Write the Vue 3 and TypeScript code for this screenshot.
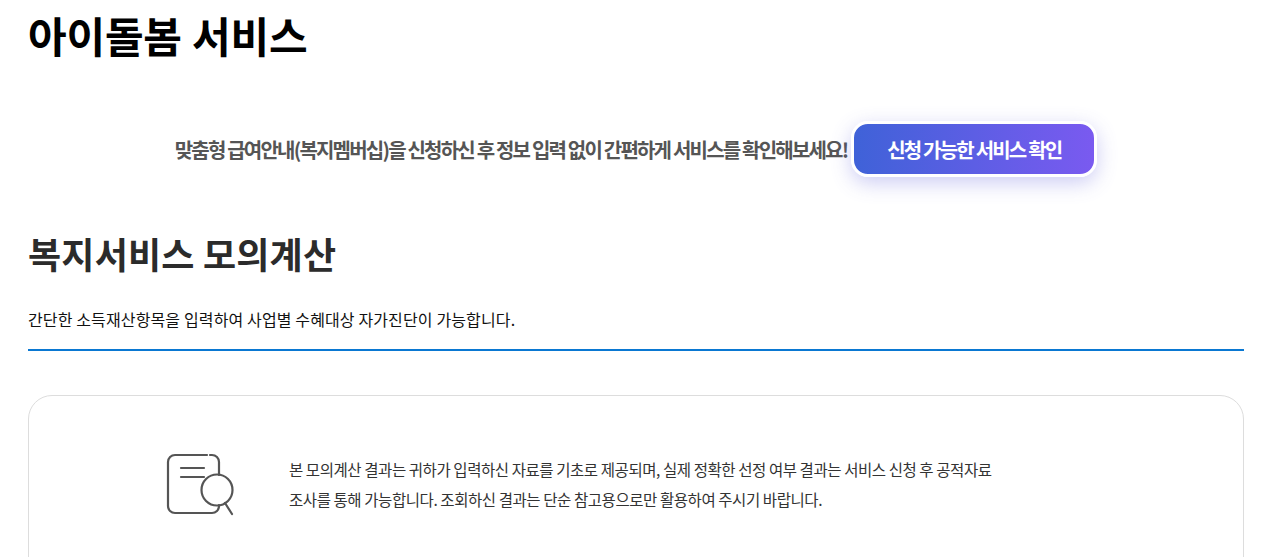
<script setup lang="ts">
const title = '아이돌봄 서비스'
</script>
<template>
  <div class="page">
    <h1 class="title">{{ title }}</h1>
    <div class="promo">
      <p class="promo-text">맞춤형 급여안내(복지멤버십)을 신청하신 후 정보 입력 없이 간편하게 서비스를 확인해보세요!</p>
      <button class="promo-btn">신청 가능한 서비스 확인</button>
    </div>
    <h2 class="sub">복지서비스 모의계산</h2>
    <p class="desc">간단한 소득재산항목을 입력하여 사업별 수혜대상 자가진단이 가능합니다.</p>
    <div class="card">
      <svg class="icon" width="68" height="63" viewBox="0 0 68 63" fill="none" stroke="#555" stroke-width="2.2" stroke-linecap="round" stroke-linejoin="round">
        <path d="M41 2H9a7 7 0 0 0-7 7v44a7 7 0 0 0 7 7h37a7 7 0 0 0 7-7v-1" />
        <path d="M44 2h2a7 7 0 0 1 7 7v13" />
        <path d="M15 15h23M15 24h23" />
        <circle cx="51" cy="37" r="15.5" />
        <path d="M59 50l7 11" />
      </svg>
      <p class="notice">본 모의계산 결과는 귀하가 입력하신 자료를 기초로 제공되며, 실제 정확한 선정 여부 결과는 서비스 신청 후 공적자료<br />조사를 통해 가능합니다. 조회하신 결과는 단순 참고용으로만 활용하여 주시기 바랍니다.</p>
    </div>
  </div>
</template>
<style>
html, body { margin: 0; background: #fff; overflow: hidden; }
</style>
<style scoped>
.page { padding: 0 21px 0 28px; height: 557px; overflow: hidden; box-sizing: border-box; font-family: "Noto Sans CJK KR", "Noto Sans", sans-serif; color: #000; }
.title { margin: 0; font-size: 42px; line-height: 70px; font-weight: 700; letter-spacing: -0.2px; word-spacing: 1px; }
.promo { display: flex; justify-content: center; align-items: center; gap: 4px; margin-top: 51px; }
.promo-text { margin: 0; font-size: 20px; font-weight: 700; color: #555; letter-spacing: -1.8px; }
.promo-btn { width: 246px; height: 56px; border: 3px solid #fff; border-radius: 17px; background: linear-gradient(90deg, #3f62d8, #7a5af0); color: #fff; font: inherit; font-size: 20px; font-weight: 700; letter-spacing: -1.8px; box-shadow: 0 6px 20px rgba(90,90,220,.3); }
.sub { margin: 50px 0 0; font-size: 36px; line-height: 52px; font-weight: 700; color: #2b2b2b; letter-spacing: 0.2px; }
.desc { margin: 0; padding: 28px 0 18px; font-size: 16px; line-height: 24px; border-bottom: 2px solid #0a78d2; color: #111; letter-spacing: 0.13px; }
.card { display: flex; margin-top: 44px; height: 210px; box-sizing: border-box; padding: 57px 0 0 137px; border: 1px solid #ddd; border-radius: 24px; gap: 55px; align-items: flex-start; }
.notice { margin: 2px 0 0; font-size: 15.5px; line-height: 29.5px; color: #333; letter-spacing: -0.43px; }
</style>
